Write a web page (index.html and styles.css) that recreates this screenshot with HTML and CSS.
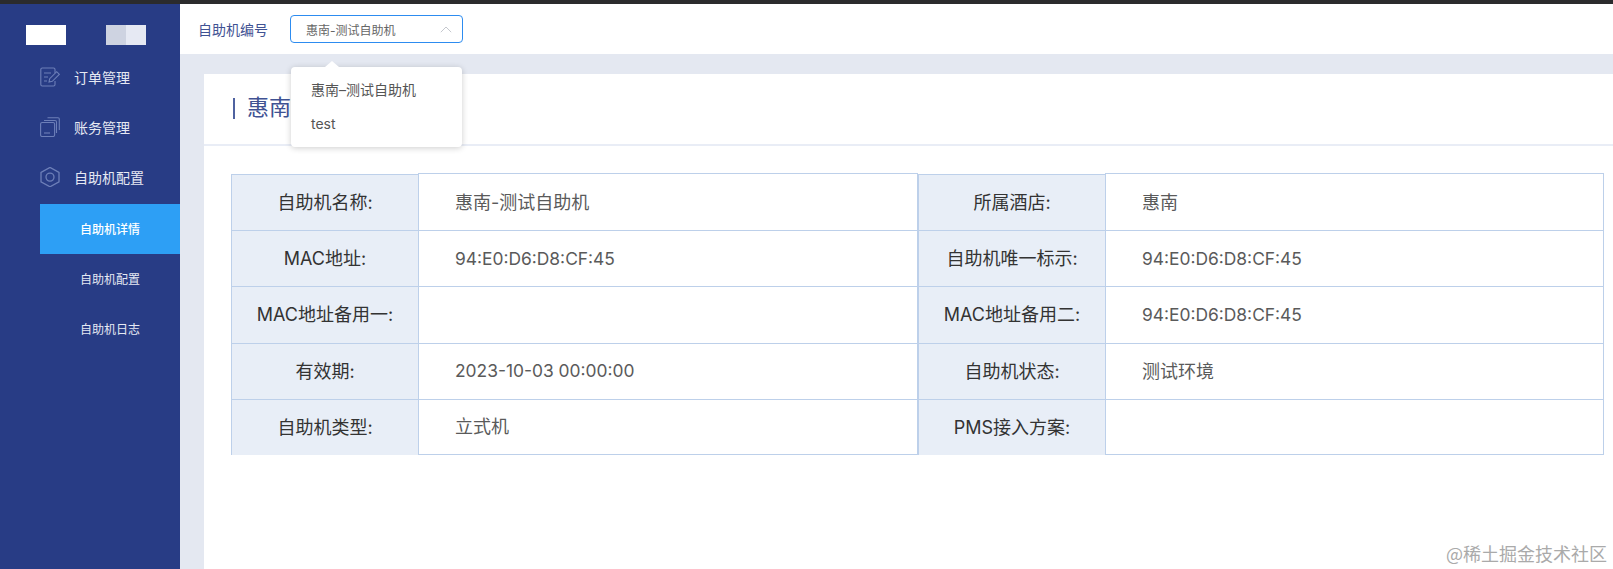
FILE: index.html
```html
<!DOCTYPE html>
<html lang="zh">
<head>
<meta charset="utf-8">
<title>自助机详情</title>
<link rel="stylesheet" href="styles.css">
</head>
<body>
<div class="topline"></div>
<div class="app">
  <aside class="sidebar">
    <div class="logo"><span class="logo-a"></span><span class="logo-gap"></span><span class="logo-b"></span><span class="logo-c"></span></div>
    <nav class="nav">
      <a class="nav-item">
        <svg class="nav-icon" viewBox="0 0 20 20" fill="none"><path d="M15 6V2.500a1.500 1.500 0 0 0-1.500-1.500H2.300a1.500 1.500 0 0 0-1.500 1.500v15a1.500 1.500 0 0 0 1.500 1.500h11.200a1.500 1.500 0 0 0 1.500-1.500V14" /><path d="M4 6h7M4 10h4M4 14h3" /><path d="M9 15l.7-3.300 7-7 2.600 2.600-7 7z" /></svg>
        <span>订单管理</span>
      </a>
      <a class="nav-item">
        <svg class="nav-icon" viewBox="0 0 20 20" fill="none"><rect x=".6" y="5.500" width="14" height="14" rx="1.500"/><path d="M4 16h6" /><path d="M4 3.500h11a1.500 1.500 0 0 1 1.500 1.500v11" /><path d="M7.500.7H18a1.300 1.300 0 0 1 1.300 1.300v11" /></svg>
        <span>账务管理</span>
      </a>
      <a class="nav-item">
        <svg class="nav-icon hex" viewBox="0 0 20 20" fill="none"><path d="M10 .4l9 5v9.400l-9 5-9-5v-9.400z"/><circle cx="10" cy="10.100" r="4"/></svg>
        <span>自助机配置</span>
      </a>
      <a class="sub-item active">自助机详情</a>
      <a class="sub-item">自助机配置</a>
      <a class="sub-item">自助机日志</a>
    </nav>
  </aside>
  <div class="main">
    <header class="header">
      <label class="header-label">自助机编号</label>
      <div class="select">
        <span class="select-value">惠南-测试自助机</span>
        <svg class="chevron" viewBox="0 0 12 7" fill="none"><path d="M.8 6.200L6 1l5.200 5.200"/></svg>
        <div class="dropdown">
          <span class="arrow"></span>
          <div class="option">惠南–测试自助机</div>
          <div class="option">test</div>
        </div>
      </div>
    </header>
    <div class="content">
      <section class="card">
        <div class="card-title"><span class="title-text">惠南</span></div>
        <div class="table">
          <div class="row">
            <div class="key">自助机名称:</div><div class="val">惠南-测试自助机</div>
            <div class="key">所属酒店:</div><div class="val">惠南</div>
          </div>
          <div class="row">
            <div class="key">MAC地址:</div><div class="val num">94:E0:D6:D8:CF:45</div>
            <div class="key">自助机唯一标示:</div><div class="val num">94:E0:D6:D8:CF:45</div>
          </div>
          <div class="row">
            <div class="key">MAC地址备用一:</div><div class="val"></div>
            <div class="key">MAC地址备用二:</div><div class="val num">94:E0:D6:D8:CF:45</div>
          </div>
          <div class="row">
            <div class="key">有效期:</div><div class="val num">2023-10-03 00:00:00</div>
            <div class="key">自助机状态:</div><div class="val">测试环境</div>
          </div>
          <div class="row">
            <div class="key">自助机类型:</div><div class="val">立式机</div>
            <div class="key">PMS接入方案:</div><div class="val"></div>
          </div>
        </div>
      </section>
    </div>
  </div>
</div>
<div class="watermark">@稀土掘金技术社区</div>
</body>
</html>
```
FILE: styles.css
```css
* { box-sizing: border-box; }
html, body { margin: 0; padding: 0; height: 569px; overflow: hidden; }
body { font-family: "Inter", "Noto Sans CJK SC", sans-serif; background: #fff; color: #333; position: relative; }
.topline { height: 4px; background: #2b2b2d; }
.app { display: flex; height: 565px; }
.sidebar { width: 180px; flex: none; background: #283c85; color: #e6e9f3; }
.logo { display: flex; height: 20px; margin: 21px 0 0 26px; }
.logo-a { width: 40px; background: #fff; }
.logo-gap { width: 40px; }
.logo-b { width: 20px; background: #ced3e1; }
.logo-c { width: 20px; background: #e6e9f3; }
.nav { display: flex; flex-direction: column; margin-top: 7px; }
.nav-item { display: flex; align-items: center; height: 50px; padding-left: 40px; font-size: 14px; color: #e6e9f3; }
.nav-item span { margin-left: 14px; }
.nav-icon { width: 20px; height: 20px; stroke: #6d7fb8; stroke-width: 1.100; flex: none; }
.nav-icon.hex { stroke-width: 1.300; }
.nav-item + .sub-item { margin-top: 2px; }
.sub-item { display: flex; align-items: center; height: 50px; margin-left: 40px; padding: 0 0 2px 40px; font-size: 12px; color: #e6e9f3; }
.sub-item.active { background: #2d9ff5; color: #fff; font-weight: 500; }
.main { flex: 1; display: flex; flex-direction: column; min-width: 0; }
.header { display: flex; align-items: center; height: 50px; flex: none; background: #fff; padding-left: 18px; }
.header-label { font-size: 14px; color: #3f5293; margin-right: 22px; }
.select { position: relative; width: 173px; height: 28px; border: 1px solid #2d8cf0; border-radius: 4px; display: flex; align-items: center; justify-content: space-between; padding: 0 10px 0 15px; }
.select-value { font-size: 12px; color: #666; }
.chevron { width: 12px; height: 7px; stroke: #c5c8ce; stroke-width: 1; }
.dropdown { position: absolute; z-index: 2; top: 51px; left: 0; width: 171px; height: 80px; background: #fff; border-radius: 4px; box-shadow: 0 1px 6px rgba(0, 0, 0, .2); padding: 6px 0; }
.arrow { position: absolute; top: -6px; left: 34px; width: 0; height: 0; border-left: 7px solid transparent; border-right: 7px solid transparent; border-bottom: 6px solid #fff; }
.option { height: 34px; padding-left: 20px; font-size: 14px; line-height: 34px; color: #555; }
.content { flex: 1; background: #e4e8f1; padding: 20px 0 0 24px; min-height: 0; }
.card { background: #fff; height: 100%; }
.card-title { height: 72px; border-bottom: 2px solid #e9edf6; padding: 24px 0 0 29px; }
.title-text { display: block; border-left: 2px solid #4f62a0; padding-left: 12px; height: 21px; line-height: 19px; font-size: 22px; color: #3f5293; }
.table { margin: 28px 0 0 27px; width: 1373px; display: flex; flex-direction: column; }
.row { display: grid; grid-template-columns: 187px 500px 187px 499px; height: 56.200px; }
.key, .val { display: flex; align-items: center; }
.key { justify-content: center; font-size: 18px; padding-bottom: 3px; background: #e8eef7; border: 1px solid #bdd0ea; border-right: 0; border-bottom: 0; color: #333; }
.val { padding: 0 0 3px 36px; font-size: 18px; border: 1px solid #bdd0ea; border-bottom: 0; color: #5a5a5a; }
.val.num { font-size: 17.400px; padding-bottom: 1px; }
.row:first-child .val { margin-top: -1px; }
.row:last-child .val { border-bottom: 1px solid #bdd0ea; }
.watermark { position: absolute; right: 6px; bottom: 3px; font-family: "Noto Sans CJK SC", sans-serif; font-size: 18px; color: #aaa; }
```
